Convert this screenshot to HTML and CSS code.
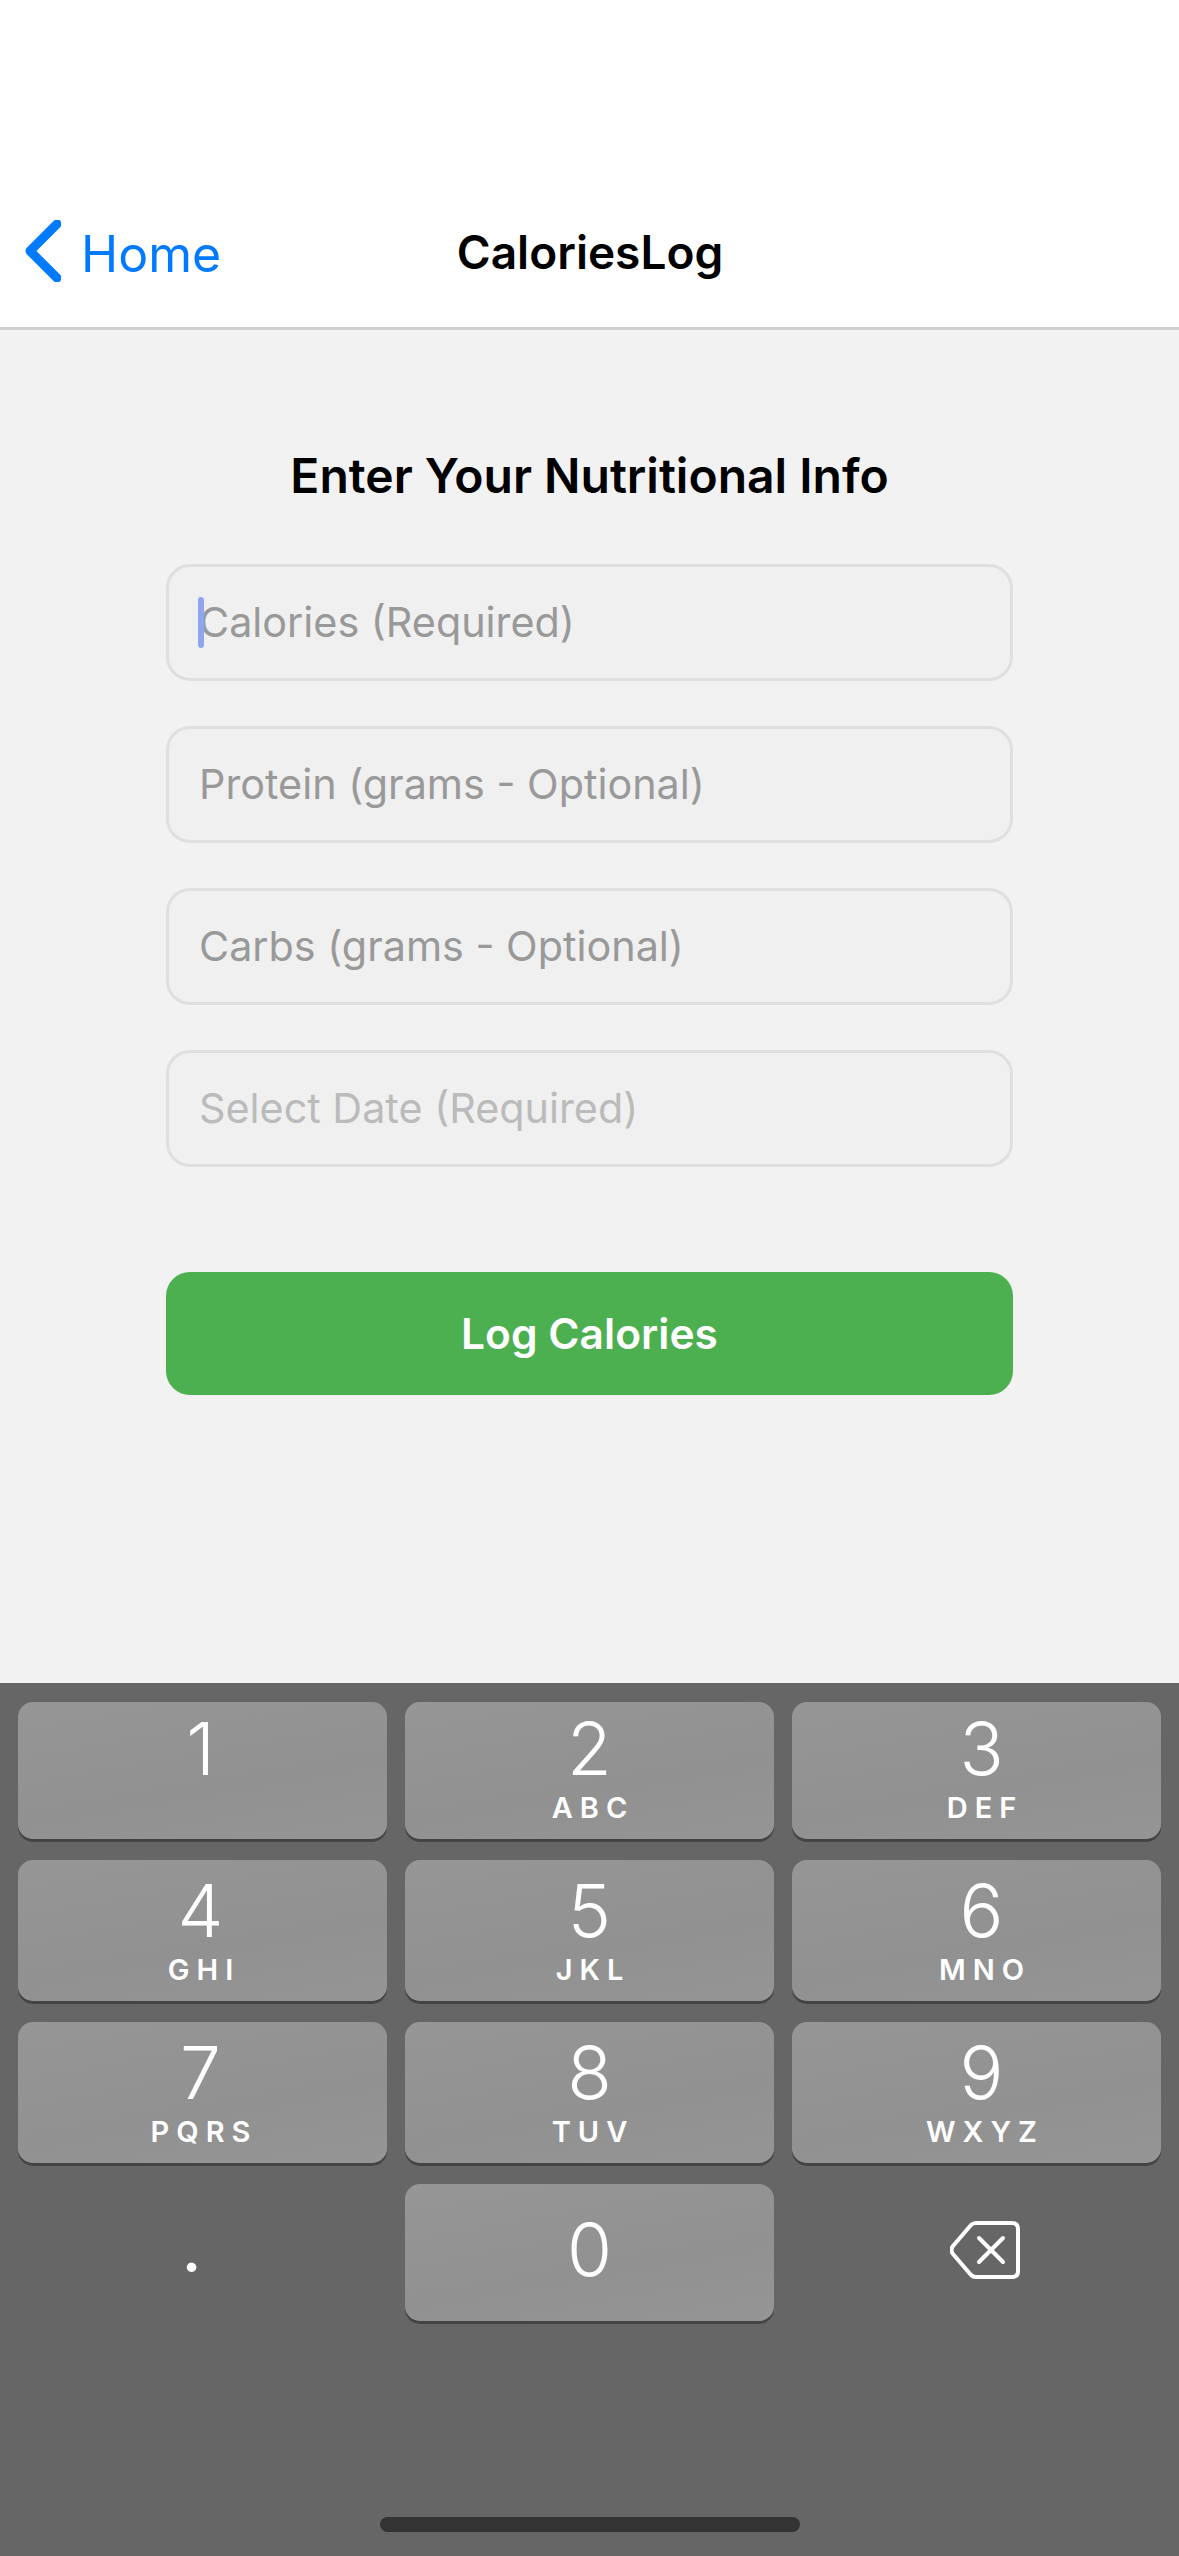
FILE: index.html
```html
<!DOCTYPE html>
<html lang="en">
<head>
    <meta charset="UTF-8">
    <meta name="viewport" content="width=device-width, initial-scale=1.0">
    <title>CaloriesLog</title>
    <link rel="stylesheet" href="styles.css">
</head>
<body>

    <header class="nav-bar">
        <a class="back-link" href="#">
            <svg class="back-icon" viewBox="0 0 36 62" width="36" height="62">
                <path d="M32 4 L5 31 L32 58" />
            </svg>
            <span>Home</span>
        </a>
        <h2 class="nav-title">CaloriesLog</h2>
    </header>

    <main class="form-area">
        <h1>Enter Your Nutritional Info</h1>

        <div class="field">
            <span class="caret"></span>
            <input type="text" placeholder="Calories (Required)">
        </div>
        <div class="field">
            <input type="text" placeholder="Protein (grams - Optional)">
        </div>
        <div class="field">
            <input type="text" placeholder="Carbs (grams - Optional)">
        </div>
        <div class="field field-date">
            <input type="text" placeholder="Select Date (Required)">
        </div>

        <button class="log-button">Log Calories</button>
    </main>

    <section class="keyboard">
        <div class="key-row short">
            <div class="key"><span class="digit">1</span></div>
            <div class="key"><span class="digit">2</span><span class="letters">ABC</span></div>
            <div class="key"><span class="digit">3</span><span class="letters">DEF</span></div>
        </div>
        <div class="key-row">
            <div class="key"><span class="digit">4</span><span class="letters">GHI</span></div>
            <div class="key"><span class="digit">5</span><span class="letters">JKL</span></div>
            <div class="key"><span class="digit">6</span><span class="letters">MNO</span></div>
        </div>
        <div class="key-row">
            <div class="key"><span class="digit">7</span><span class="letters">PQRS</span></div>
            <div class="key"><span class="digit">8</span><span class="letters">TUV</span></div>
            <div class="key"><span class="digit">9</span><span class="letters">WXYZ</span></div>
        </div>
        <div class="key-row short">
            <div class="key-plain dot-key">.</div>
            <div class="key zero-key"><span class="digit">0</span></div>
            <div class="key-plain delete-key">
                <svg class="delete-icon" viewBox="0 0 70 58" width="70" height="58">
                    <path d="M26 2 H62 Q68 2 68 8 V50 Q68 56 62 56 H26 Q23 56 21 54 L3 33 Q0 29 3 25 L21 4 Q23 2 26 2 Z" />
                    <path d="M29 17 L53 41 M53 17 L29 41" />
                </svg>
            </div>
        </div>
        <div class="home-indicator"></div>
    </section>

</body>
</html>
```

FILE: styles.css
```css
* {
    box-sizing: border-box;
}

body {
    font-family: Inter, 'Noto Sans', sans-serif;
    margin: 0;
    width: 1179px;
    height: 2556px;
    overflow: hidden;
    display: flex;
    flex-direction: column;
    background-color: #f2f2f2;
    color: #000;
}

.nav-bar {
    height: 330px;
    background-color: #fff;
    border-bottom: 3px solid #cfcfcf;
    display: grid;
    grid-template-columns: 1fr auto 1fr;
    align-items: center;
    padding: 176px 0 0 25px;
    flex-shrink: 0;
}

.back-link {
    display: flex;
    align-items: center;
    gap: 20px;
    color: #007aff;
    text-decoration: none;
    font-size: 50px;
}

.back-link span {
    position: relative;
    top: 2px;
}

.back-icon {
    position: relative;
    top: -1px;
}

.back-icon path {
    fill: none;
    stroke: #007aff;
    stroke-width: 9;
    stroke-linecap: round;
    stroke-linejoin: round;
}

.nav-title {
    margin: 0;
    font-size: 46px;
    font-weight: 600;
    grid-column: 2;
    position: relative;
    left: -12px;
}

.form-area {
    flex: 1;
    display: flex;
    flex-direction: column;
    align-items: center;
    padding-top: 118px;
}

h1 {
    margin: 0 0 60px;
    font-size: 48px;
    line-height: 56px;
    font-weight: 600;
}

.field {
    position: relative;
    width: 847px;
    height: 117px;
    margin-bottom: 45px;
}

.field input {
    width: 100%;
    height: 100%;
    padding: 0 30px 2px;
    font-family: inherit;
    font-size: 41.3px;
    background-color: #f0f0f0;
    border: 3px solid #dfdfdf;
    border-radius: 24px;
    outline: none;
}

.field input::placeholder {
    color: #999;
    opacity: 1;
}

.field-date input::placeholder {
    color: #bbb;
}

.caret {
    position: absolute;
    left: 32px;
    top: 33px;
    width: 6px;
    height: 51px;
    border-radius: 3px;
    background-color: #8fa6ef;
}

.log-button {
    width: 847px;
    height: 123px;
    margin-top: 60px;
    background-color: #4caf50;
    color: #fff;
    border: none;
    border-radius: 24px;
    font-family: inherit;
    font-size: 42.5px;
    font-weight: 600;
}

.keyboard {
    height: 873px;
    flex-shrink: 0;
    background-color: #666;
    padding: 19px 18px 0;
    display: flex;
    flex-direction: column;
    gap: 21px;
    position: relative;
}

.key-row {
    display: grid;
    grid-template-columns: repeat(3, 369px);
    gap: 18px;
    height: 141px;
}

.key-row.short {
    height: 137px;
}

.key {
    display: flex;
    flex-direction: column;
    align-items: center;
    padding-top: 13px;
    color: #fff;
    background: linear-gradient(170deg, #969696, #919191 60%, #959595);
    border-radius: 15px;
    box-shadow: 0 3px 0 #444;
}

.key:first-child {
    padding-right: 4px;
}

.key:last-child {
    padding-left: 10px;
}

.key-row.short .key {
    padding-top: 9px;
}

.digit {
    font-size: 73px;
    font-weight: 300;
    line-height: 76px;
}

.letters {
    font-size: 29px;
    font-weight: 600;
    line-height: 34px;
    letter-spacing: 7px;
    margin-top: 4px;
    padding-left: 7px;
}

.key-row.short .zero-key {
    padding-top: 28px;
}

.key-plain {
    display: flex;
    align-items: center;
    justify-content: center;
    color: #fff;
}

.dot-key {
    font-size: 60px;
    font-weight: 600;
    padding: 0 22px 8px 0;
}

.delete-key {
    padding: 0 0 6px 16px;
}

.delete-icon path {
    fill: none;
    stroke: #fff;
    stroke-width: 4;
    stroke-linecap: round;
    stroke-linejoin: round;
}

.home-indicator {
    position: absolute;
    left: 380px;
    bottom: 24px;
    width: 420px;
    height: 15px;
    border-radius: 8px;
    background-color: #333;
}
```
